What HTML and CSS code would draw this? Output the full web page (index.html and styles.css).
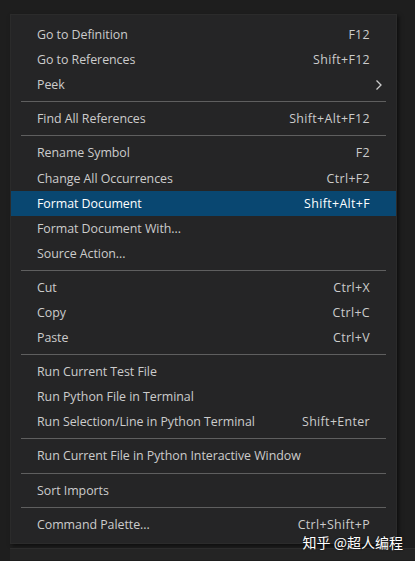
FILE: index.html
```html
<!DOCTYPE html>
<html>
<head>
<meta charset="utf-8">
<link rel="stylesheet" href="styles.css">
</head>
<body>
<div class="screen">
  <div class="menu">
    <div class="item"><span class="label">Go to Definition</span><span class="key">F12</span></div>
    <div class="item"><span class="label">Go to References</span><span class="key">Shift+F12</span></div>
    <div class="item"><span class="label">Peek</span><svg class="chev" width="8" height="12" viewBox="0 0 8 12"><path d="M1.5 1.5 L6 6 L1.5 10.5" fill="none" stroke="#cccccc" stroke-width="1.3"/></svg></div>
    <div class="sep"></div>
    <div class="item"><span class="label">Find All References</span><span class="key">Shift+Alt+F12</span></div>
    <div class="sep"></div>
    <div class="item"><span class="label">Rename Symbol</span><span class="key">F2</span></div>
    <div class="item"><span class="label">Change All Occurrences</span><span class="key">Ctrl+F2</span></div>
    <div class="item active"><span class="label">Format Document</span><span class="key">Shift+Alt+F</span></div>
    <div class="item"><span class="label">Format Document With...</span></div>
    <div class="item"><span class="label">Source Action...</span></div>
    <div class="sep"></div>
    <div class="item"><span class="label">Cut</span><span class="key">Ctrl+X</span></div>
    <div class="item"><span class="label">Copy</span><span class="key">Ctrl+C</span></div>
    <div class="item"><span class="label">Paste</span><span class="key">Ctrl+V</span></div>
    <div class="sep"></div>
    <div class="item"><span class="label">Run Current Test File</span></div>
    <div class="item"><span class="label">Run Python File in Terminal</span></div>
    <div class="item"><span class="label">Run Selection/Line in Python Terminal</span><span class="key">Shift+Enter</span></div>
    <div class="sep"></div>
    <div class="item"><span class="label">Run Current File in Python Interactive Window</span></div>
    <div class="sep"></div>
    <div class="item"><span class="label">Sort Imports</span></div>
    <div class="sep"></div>
    <div class="item"><span class="label">Command Palette...</span><span class="key">Ctrl+Shift+P</span></div>
  </div>
  <div class="bottom-bar"></div>
  <div class="watermark">知乎 @超人编程</div>
</div>
</body>
</html>
```
FILE: styles.css
```css
* { box-sizing: border-box; }
html, body {
  margin: 0;
  padding: 0;
  background: #1e1e1e;
}
.screen {
  position: relative;
  width: 415px;
  height: 561px;
  overflow: hidden;
  padding-top: 14px;
  padding-left: 10px;
  font-family: "Open Sans", "Noto Sans", sans-serif;
}
.menu {
  width: 387px;
  background: #252526;
  border: 1px solid #2b2b2b;
  padding: 7px 0 6px 0;
  box-shadow: 2px 2px 4px rgba(0,0,0,0.55);
  display: flex;
  flex-direction: column;
}
.item {
  height: 25.1px;
  display: flex;
  align-items: center;
  justify-content: space-between;
  padding: 0 26px 0 26px;
  color: #cccccc;
  font-size: 12.4px;
  letter-spacing: -0.04px;
  position: relative;
}
.key {
  letter-spacing: 0.35px;
}
.item.active {
  background: #094771;
  color: #ffffff;
}
.chev {
  position: absolute;
  right: 13px;
  top: 7px;
}
.sep {
  height: 9px;
  margin: 0 10px;
  display: flex;
  align-items: center;
}
.sep::before {
  content: "";
  flex: 1;
  height: 1px;
  background: #5f5f5f;
}
.bottom-bar {
  margin-top: 4px;
  height: 12px;
  background: #242424;
  border-top: 1px solid #2c2c2c;
}
.watermark {
  position: absolute;
  right: 12px;
  bottom: 11px;
  color: #ffffff;
  font-family: "Noto Sans CJK SC", sans-serif;
  font-size: 14px;
  line-height: 16px;
  text-shadow: 0 0 2px rgba(0,0,0,0.6);
}
```
